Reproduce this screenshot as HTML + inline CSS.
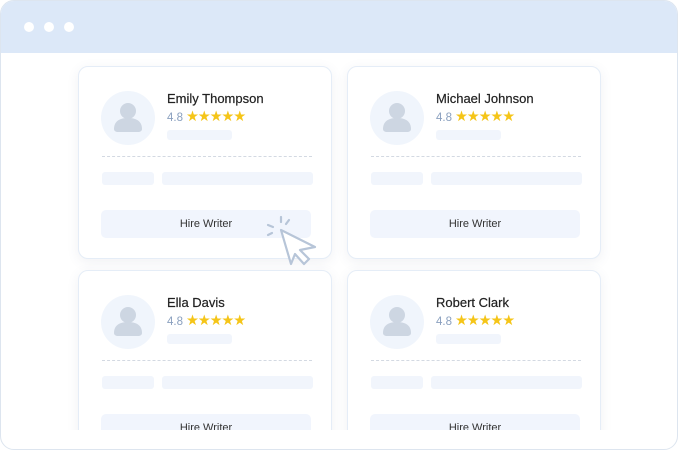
<!DOCTYPE html><html><head><style>
*{margin:0;padding:0;box-sizing:border-box}
body{width:678px;height:450px;background:#fff;font-family:"Liberation Sans",sans-serif;overflow:hidden;position:relative}
.frame{position:absolute;left:0;top:0;width:678px;height:450px;border:1.5px solid #dde5ef;border-radius:14px;overflow:hidden;background:#fff}
.hdr{position:absolute;left:0;top:0;width:100%;height:52px;background:#dce8f8}
.dot{position:absolute;top:21px;width:10px;height:10px;border-radius:50%;background:#fff}
.clip{position:absolute;left:0;top:52px;width:100%;height:377px;overflow:hidden}
.card{position:absolute;width:254px;height:193px;border:1px solid #e5edf7;border-radius:10px;background:#fff;box-shadow:0 3px 12px rgba(60,80,120,.08)}
.av{position:absolute;left:22px;top:24px;width:54px;height:54px;border-radius:50%;background:#f0f5fc}
.name{position:absolute;left:88px;top:24px;font-size:13px;color:#222;-webkit-text-stroke:0.2px #222}
.rt{position:absolute;left:88px;top:45px;font-size:11.5px;color:#8aa0bf}
.st{position:absolute;left:107px;top:42px;font-size:14.5px;color:#f5c518;letter-spacing:-1.2px}
.bar{position:absolute;background:#f1f5fc;border-radius:3px}
.dash{position:absolute;left:23px;top:89px;width:210px;border-top:1px dashed #d3d9e2}
.btn{position:absolute;left:22px;top:143px;width:210px;height:28px;background:#f1f5fd;border-radius:5px;font-size:11px;color:#333;text-align:center;line-height:28px}
</style></head><body>
<div class="frame">
<div class="hdr"><div class="dot" style="left:23px"></div><div class="dot" style="left:43px"></div><div class="dot" style="left:63px"></div></div>
<div class="clip">
<div class="card" style="left:77px;top:13px">
<div class="av"><svg width="54" height="54"><circle cx="27" cy="20" r="8" fill="#cdd6e2"/><path d="M13 38c0-8 6-11 14-11s14 3 14 11c0 2-2 3-4 3H17c-2 0-4-1-4-3z" fill="#cdd6e2"/></svg></div>
<div class="name">Emily Thompson</div><div class="rt">4.8</div><div class="st">★★★★★</div>
<div class="bar" style="left:88px;top:63px;width:65px;height:10px"></div>
<div class="dash"></div>
<div class="bar" style="left:23px;top:105px;width:52px;height:13px"></div>
<div class="bar" style="left:83px;top:105px;width:151px;height:13px"></div>
<div class="btn">Hire Writer</div>
</div>
<div class="card" style="left:346px;top:13px">
<div class="av"><svg width="54" height="54"><circle cx="27" cy="20" r="8" fill="#cdd6e2"/><path d="M13 38c0-8 6-11 14-11s14 3 14 11c0 2-2 3-4 3H17c-2 0-4-1-4-3z" fill="#cdd6e2"/></svg></div>
<div class="name">Michael Johnson</div><div class="rt">4.8</div><div class="st">★★★★★</div>
<div class="bar" style="left:88px;top:63px;width:65px;height:10px"></div>
<div class="dash"></div>
<div class="bar" style="left:23px;top:105px;width:52px;height:13px"></div>
<div class="bar" style="left:83px;top:105px;width:151px;height:13px"></div>
<div class="btn">Hire Writer</div>
</div>
<div class="card" style="left:77px;top:217px">
<div class="av"><svg width="54" height="54"><circle cx="27" cy="20" r="8" fill="#cdd6e2"/><path d="M13 38c0-8 6-11 14-11s14 3 14 11c0 2-2 3-4 3H17c-2 0-4-1-4-3z" fill="#cdd6e2"/></svg></div>
<div class="name">Ella Davis</div><div class="rt">4.8</div><div class="st">★★★★★</div>
<div class="bar" style="left:88px;top:63px;width:65px;height:10px"></div>
<div class="dash"></div>
<div class="bar" style="left:23px;top:105px;width:52px;height:13px"></div>
<div class="bar" style="left:83px;top:105px;width:151px;height:13px"></div>
<div class="btn">Hire Writer</div>
</div>
<div class="card" style="left:346px;top:217px">
<div class="av"><svg width="54" height="54"><circle cx="27" cy="20" r="8" fill="#cdd6e2"/><path d="M13 38c0-8 6-11 14-11s14 3 14 11c0 2-2 3-4 3H17c-2 0-4-1-4-3z" fill="#cdd6e2"/></svg></div>
<div class="name">Robert Clark</div><div class="rt">4.8</div><div class="st">★★★★★</div>
<div class="bar" style="left:88px;top:63px;width:65px;height:10px"></div>
<div class="dash"></div>
<div class="bar" style="left:23px;top:105px;width:52px;height:13px"></div>
<div class="bar" style="left:83px;top:105px;width:151px;height:13px"></div>
<div class="btn">Hire Writer</div>
</div>
<svg style="position:absolute;left:262px;top:161px" width="60" height="56" viewBox="0 0 60 56">
<g stroke="#b7c5d8" stroke-width="2.2" stroke-linecap="round" fill="none">
<line x1="18" y1="3" x2="18" y2="8"/><line x1="26" y1="6" x2="23" y2="10"/><line x1="5" y1="11" x2="10" y2="13"/><line x1="5" y1="21" x2="9" y2="19"/>
<path d="M18 16 L28 50 L32 40 L41 50 L46 45 L37 36 L52 33 Z" fill="#fff" stroke-linejoin="round"/>
</g></svg>
</div>
</div>
</body></html>
